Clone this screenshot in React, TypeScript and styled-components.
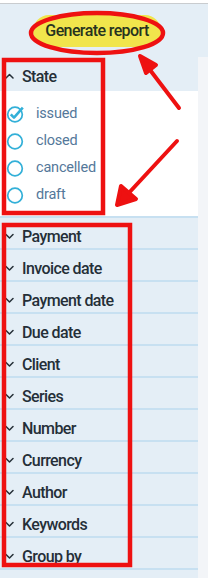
import React from 'react';
import styled, { createGlobalStyle } from 'styled-components';

const GlobalStyle = createGlobalStyle`
  html, body {
    margin: 0;
    padding: 0;
    background: #ffffff;
  }
  body {
    font-family: Roboto, "Liberation Sans", sans-serif;
  }
`;

const Page = styled.div`
  position: relative;
  width: 208px;
  height: 581px;
  overflow: hidden;
  padding-top: 3px;
  box-sizing: border-box;
  background: #ffffff;
`;

const Toolbar = styled.div`
  height: 53px;
  border-top: 1px solid #c9cccf;
  background: #e4eef6;
  display: flex;
  align-items: center;
  justify-content: center;
  padding-right: 14px;
`;

const ReportButton = styled.button`
  border: none;
  background: #f1e54c;
  color: #27331f;
  font-family: Roboto, "Liberation Sans", sans-serif;
  font-weight: 500;
  font-size: 16px;
  letter-spacing: -0.6px;
  height: 32px;
  padding: 0 12px;
  border-radius: 16px;
  cursor: pointer;
`;

const Main = styled.div`
  display: flex;
  height: calc(100% - 57px);
`;

const Panel = styled.div`
  width: 198px;
  background: #e4eef6;
  display: flex;
  flex-direction: column;
`;

const Side = styled.div`
  flex: 1;
  background: #f3f5f8;
`;

const Section = styled.div`
  border-bottom: 2px solid #c7e0f1;
`;

const Header = styled.div<{ $tall?: boolean }>`
  height: ${p => (p.$tall ? 34 : 30)}px;
  padding-top: ${p => (p.$tall ? 4 : 6)}px;
  box-sizing: border-box;
  display: flex;
  align-items: center;
  gap: 8px;
  padding-left: 5px;
  color: #252f38;
  font-weight: 500;
  font-size: 16px;
  letter-spacing: -0.6px;
`;

const Body = styled.div`
  background: #ffffff;
  padding: 9px 0 8px 6px;
`;

const Option = styled.div`
  height: 27px;
  display: flex;
  align-items: center;
  gap: 12px;
  color: #54789a;
  font-size: 14.5px;
  letter-spacing: -0.2px;
`;

const Chevron: React.FC<{ up?: boolean }> = ({ up }) => (
  <svg width="9" height="6" viewBox="0 0 9 6">
    <path
      d={up ? 'M1 5 L4.5 1.5 L8 5' : 'M1 1.5 L4.5 5 L8 1.5'}
      fill="none"
      stroke="#252f38"
      strokeWidth="1.5"
      strokeLinecap="round"
      strokeLinejoin="round"
    />
  </svg>
);

const Radio: React.FC<{ checked?: boolean }> = ({ checked }) => (
  <svg width="18" height="18" viewBox="0 0 18 18">
    <circle cx="9" cy="9.5" r="7.3" fill="none" stroke="#33b0d8" strokeWidth="1.7" />
    {checked && (
      <path d="M4.8 9.3 L8 12.6 L16.8 2.6" fill="none" stroke="#33b0d8" strokeWidth="2.6" strokeLinejoin="round" />
    )}
  </svg>
);

const Overlay = styled.svg`
  position: absolute;
  left: 0;
  top: 0;
  pointer-events: none;
`;

const states = ['issued', 'closed', 'cancelled', 'draft'];
const filters = [
  'Payment',
  'Invoice date',
  'Payment date',
  'Due date',
  'Client',
  'Series',
  'Number',
  'Currency',
  'Author',
  'Keywords',
  'Group by',
];

export default function App() {
  return (
    <>
      <GlobalStyle />
      <Page>
        <Toolbar>
          <ReportButton>Generate report</ReportButton>
        </Toolbar>
        <Main>
          <Panel>
            <Section>
              <Header $tall>
                <Chevron up />
                State
              </Header>
              <Body>
                {states.map((s, i) => (
                  <Option key={s}>
                    <Radio checked={i === 0} />
                    {s}
                  </Option>
                ))}
              </Body>
            </Section>
            {filters.map(f => (
              <Section key={f}>
                <Header>
                  <Chevron />
                  {f}
                </Header>
              </Section>
            ))}
          </Panel>
          <Side />
        </Main>
        <Overlay width="208" height="581" viewBox="0 0 208 581">
          <g fill="none" stroke="#ee1111" strokeWidth="4.5">
            <ellipse cx="97" cy="33" rx="66" ry="20" />
            <rect x="4" y="60" width="99" height="153" />
            <rect x="4" y="225" width="126" height="340" />
          </g>
          <g stroke="#ee1111" strokeWidth="4" strokeLinecap="round" fill="#ee1111">
            <line x1="179" y1="108" x2="147" y2="66" />
            <path d="M140 56 L156 65 L146 73 Z" strokeLinejoin="round" />
            <line x1="177" y1="141" x2="126" y2="196" />
            <path d="M117 205 L121 186 L136 199 Z" strokeLinejoin="round" />
          </g>
        </Overlay>
      </Page>
    </>
  );
}
